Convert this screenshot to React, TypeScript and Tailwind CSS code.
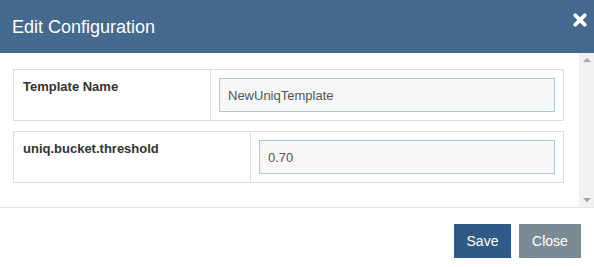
import React from 'react';

const font = { fontFamily: '"Liberation Sans", Arial, sans-serif' };

const ConfigRow = ({ label, value, labelWidth }: { label: string; value: string; labelWidth: string }) => (
  <div className="flex h-[52px] border border-[#dddddd]">
    <div className={`${labelWidth} shrink-0 border-r border-[#dddddd] pl-[9px] pt-[7px] text-[13px] font-bold text-[#333333]`}>
      {label}
    </div>
    <div className="flex-1 pl-[8px] pr-[8px] pt-[8px]">
      <input
        readOnly
        value={value}
        className="h-[34px] w-full border border-[#a9c8da] bg-[#f7f7f7] px-[8px] text-[13px] text-[#555555] outline-none"
      />
    </div>
  </div>
);

const App: React.FC = () => {
  return (
    <div className="flex h-[267px] w-[594px] flex-col bg-white" style={font}>
      {/* Header */}
      <div className="flex h-[53px] shrink-0 items-center justify-between bg-[#466a8f] pl-[12px] pr-[7px]">
        <h1 className="pt-[1px] text-[18px] text-white">Edit Configuration</h1>
        <svg className="mb-[14px] h-[14px] w-[14px]" viewBox="0 0 12 12">
          <path d="M2 2 L10 10 M10 2 L2 10" stroke="white" strokeWidth={3.2} strokeLinecap="round" />
        </svg>
      </div>

      {/* Body */}
      <div className="flex h-[155px] shrink-0 border-b border-[#e5e5e5]">
        <div className="flex-1 pl-[13px] pr-[15px] pt-[16px]">
          <ConfigRow label="Template Name" value="NewUniqTemplate" labelWidth="w-[197px]" />
          <div className="mt-[10px]">
            <ConfigRow label="uniq.bucket.threshold" value="0.70" labelWidth="w-[237px]" />
          </div>
        </div>
        {/* Scrollbar */}
        <div className="flex w-[15px] flex-col items-center justify-between bg-[#f1f1f1] py-[5px]">
          <div className="h-0 w-0 border-x-[4px] border-b-[4px] border-x-transparent border-b-[#a3a3a3]" />
          <div className="h-0 w-0 border-x-[4px] border-t-[4px] border-x-transparent border-t-[#a3a3a3]" />
        </div>
      </div>

      {/* Footer */}
      <div className="flex justify-end gap-[8px] pr-[13px] pt-[16px]">
        <button className="h-[34px] w-[57px] bg-[#2f5986] text-[14px] text-white">Save</button>
        <button className="h-[34px] w-[62px] bg-[#7b8b96] text-[14px] text-white">Close</button>
      </div>
    </div>
  );
};

export default App;
